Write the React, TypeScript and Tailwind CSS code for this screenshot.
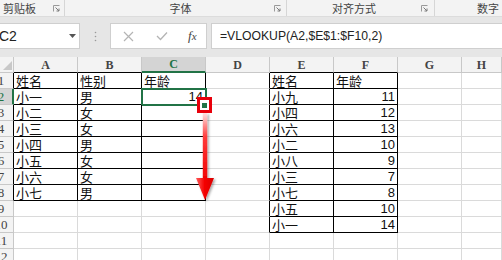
import React from "react"

const COLS = ["A", "B", "C", "D", "E", "F", "G", "H"]
const ROWS = Array.from({ length: 12 }, (_, i) => i + 1)

const cells: Record<string, string> = {
  A1: "姓名", A2: "小一", A3: "小二", A4: "小三", A5: "小四", A6: "小五", A7: "小六", A8: "小七",
  B1: "性别", B2: "男", B3: "女", B4: "女", B5: "男", B6: "女", B7: "女", B8: "男",
  C1: "年龄", C2: "14",
  E1: "姓名", E2: "小九", E3: "小四", E4: "小六", E5: "小二", E6: "小八", E7: "小三", E8: "小七", E9: "小五", E10: "小一",
  F1: "年龄", F2: "11", F3: "12", F4: "13", F5: "10", F6: "9", F7: "7", F8: "8", F9: "10", F10: "14",
}

// table ranges with black borders: A1:C8 and E1:F10
const inTable = (r: number, c: number) =>
  (r >= 1 && r <= 8 && c >= 0 && c <= 2) || (r >= 1 && r <= 10 && c >= 4 && c <= 5)

function Launcher() {
  return (
    <svg width="7" height="7" viewBox="0 0 7 7" className="shrink-0">
      <path d="M0.5 0.5 H6.5 M0.5 0.5 V6.5" stroke="#9a9a9a" strokeWidth="1" fill="none" />
      <path d="M2.5 2.5 L6 6 M6 3.5 V6 H3.5" stroke="#7a7a7a" strokeWidth="1" fill="none" />
    </svg>
  )
}

function Ribbon() {
  return (
    <div className="flex h-[16px] bg-[#f3f3f3] text-[11px] leading-[16px] text-[#444] font-['Noto_Sans_CJK_SC',sans-serif]">
      <div className="flex w-[65px] items-center border-r border-[#d6d6d6] pl-[3px] pr-[4px]">
        <span className="flex-1">剪贴板</span>
        <Launcher />
      </div>
      <div className="flex w-[222px] items-center border-r border-[#d6d6d6] pr-[5px]">
        <span className="flex-1 pl-[22px] text-center">字体</span>
        <Launcher />
      </div>
      <div className="flex w-[148px] items-center border-r border-[#d6d6d6] pr-[6px]">
        <span className="flex-1 text-center">对齐方式</span>
        <Launcher />
      </div>
      <div className="flex-1 pl-[42px] whitespace-nowrap">数字</div>
    </div>
  )
}

function FormulaBar() {
  return (
    <div className="flex h-[41px] items-start border-t border-[#dcdcdc] bg-[#e6e6e6] pt-[6px]">
      <div className="flex h-[26px] w-[80px] items-center justify-between border border-l-0 border-[#cfcfcf] bg-white pr-[3px] font-['Liberation_Sans',sans-serif] text-[14px] text-[#222]">
        <span className="-ml-[1px]">C2</span>
        <svg width="7" height="4" viewBox="0 0 7 4">
          <path d="M0 0 H7 L3.5 4 Z" fill="#555" />
        </svg>
      </div>
      <div className="flex h-[26px] w-[30px] items-center justify-center">
        <svg width="3" height="11" viewBox="0 0 3 11">
          <circle cx="1.5" cy="1.5" r="0.8" fill="#9a9a9a" />
          <circle cx="1.5" cy="5.5" r="0.8" fill="#9a9a9a" />
          <circle cx="1.5" cy="9.5" r="0.8" fill="#9a9a9a" />
        </svg>
      </div>
      <div className="flex h-[26px] w-[97px] items-center border border-[#cfcfcf] bg-white">
        <svg width="11" height="11" viewBox="0 0 11 11" className="ml-[12px]">
          <path d="M1 1 L10 10 M10 1 L1 10" stroke="#b4b4b4" strokeWidth="1.2" />
        </svg>
        <svg width="12" height="10" viewBox="0 0 12 10" className="ml-[22px]">
          <path d="M1 5 L4.5 8.5 L11 1.5" stroke="#b4b4b4" strokeWidth="1.3" fill="none" />
        </svg>
        <span className="ml-[20px] font-['Liberation_Serif',serif] text-[13px] italic text-[#444]">
          f<span className="text-[11px]">x</span>
        </span>
      </div>
      <div className="ml-[4px] flex h-[26px] flex-1 items-center border border-r-0 border-[#cfcfcf] bg-white pl-[8px] font-['Liberation_Sans',sans-serif] text-[12.2px] text-[#222]">
        =VLOOKUP(A2,$E$1:$F10,2)
      </div>
    </div>
  )
}

function Sheet() {
  return (
    <div className="grid grid-cols-[14px_repeat(7,64px)_1fr] grid-rows-[16px] auto-rows-[16px]">
      {/* corner */}
      <div className="relative overflow-hidden border-r border-b border-[#c8c8c8] bg-[#f3f3f3]">
        <svg width="9" height="9" viewBox="0 0 9 9" className="absolute right-[1px] bottom-[2px]">
          <path d="M9 0 V9 H0 Z" fill="#c8c8c8" />
        </svg>
      </div>
      {COLS.map((col, c) => (
        <div
          key={col}
          className={`flex items-center justify-center border-r border-b font-['Liberation_Serif',serif] text-[12px] leading-[14px] font-bold ${
            col === "C"
              ? "border-b-2 border-r-[#c8c8c8] border-b-[#217346] bg-[#d4d4d4] text-[#217346]"
              : inTable(1, c)
              ? "border-r-[#c8c8c8] border-b-[#000] bg-[#f3f3f3] text-[#444]"
              : "border-r-[#c8c8c8] border-b-[#c8c8c8] bg-[#f3f3f3] text-[#444]"
          }`}
        >
          {col}
        </div>
      ))}
      {ROWS.map((r) => (
        <React.Fragment key={r}>
          <div
            className={`overflow-hidden border-b border-b-[#c8c8c8] ${
              r === 2
                ? "border-r-2 border-r-[#217346] bg-[#d4d4d4] text-[#217346]"
                : inTable(r, 0)
                ? "border-r border-r-[#000] bg-[#f3f3f3] text-[#444]"
                : "border-r border-r-[#c8c8c8] bg-[#f3f3f3] text-[#444]"
            }`}
          >
            <div className="-ml-[12px] w-[26px] text-center font-['Liberation_Serif',serif] text-[13px] leading-[15px]">
              {r}
            </div>
          </div>
          {COLS.map((col, c) => {
            const key = `${col}${r}`
            const v = cells[key]
            const isNum = v !== undefined && /^\d+$/.test(v)
            const rightBlack = inTable(r, c) || inTable(r, c + 1)
            const bottomBlack = inTable(r, c) || inTable(r + 1, c)
            return (
              <div
                key={key}
                className={`relative flex items-center whitespace-nowrap border-r border-b px-[2px] text-[#111] ${
                  rightBlack ? "border-r-[#000]" : "border-r-[#dadada]"
                } ${bottomBlack ? "border-b-[#000]" : "border-b-[#dadada]"} ${
                  isNum
                    ? "justify-end font-['Liberation_Sans',sans-serif] text-[13px] leading-[15px]"
                    : "font-['Noto_Sans_CJK_SC',sans-serif] text-[13px] leading-[15px]"
                }`}
              >
                <span className="block h-[15px] leading-[15px]">{v}</span>
                {key === "C2" && (
                  <div className="absolute -left-[1px] -top-[1px] h-[18px] w-[66px] border-2 border-[#217346]" />
                )}
              </div>
            )
          })}
        </React.Fragment>
      ))}
    </div>
  )
}

export default function App() {
  return (
    <div className="relative h-[260px] w-[502px] overflow-hidden bg-white">
      <Ribbon />
      <FormulaBar />
      <Sheet />

      {/* fill handle highlighted with a red box */}
      <div className="absolute left-[197px] top-[97px] flex h-[16px] w-[15px] items-center justify-center border-[3px] border-[#e8000b] bg-white">
        <div className="h-[5px] w-[5px] bg-[#217346]" />
      </div>

      {/* drag arrow */}
      <svg className="absolute left-[188px] top-[112px]" width="36" height="96" viewBox="0 0 36 96">
        <defs>
          <linearGradient id="shaft" x1="0" y1="0" x2="0" y2="1">
            <stop offset="0" stopColor="#ffe4e4" />
            <stop offset="0.35" stopColor="#ff3b3b" />
            <stop offset="1" stopColor="#f00000" />
          </linearGradient>
          <linearGradient id="head" x1="0" y1="0" x2="1" y2="0">
            <stop offset="0" stopColor="#ff5a5a" />
            <stop offset="0.5" stopColor="#f40000" />
            <stop offset="1" stopColor="#d80000" />
          </linearGradient>
          <filter id="sh" x="-50%" y="-20%" width="200%" height="140%">
            <feDropShadow dx="1.5" dy="1.5" stdDeviation="1.2" floodColor="#000" floodOpacity="0.35" />
          </filter>
        </defs>
        <g filter="url(#sh)">
          <rect x="14.8" y="1" width="4.4" height="68" fill="url(#shaft)" />
          <path d="M8 66 H26 L17 88 Z" fill="url(#head)" />
        </g>
      </svg>
    </div>
  )
}
